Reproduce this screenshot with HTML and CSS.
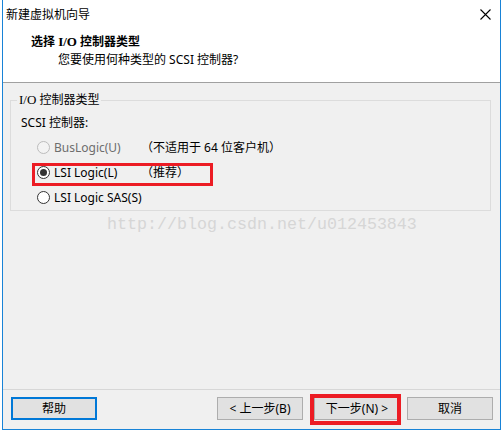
FILE: index.html
```html
<!DOCTYPE html>
<html lang="zh">
<head>
<meta charset="utf-8">
<title>新建虚拟机向导</title>
<link rel="stylesheet" href="styles.css">
</head>
<body>
<div class="window">
  <div class="titlebar">
    <span class="title">新建虚拟机向导</span>
    <svg class="close" width="11" height="11" viewBox="0 0 11 11"><path d="M0.5 0.5 L10.5 10.5 M10.5 0.5 L0.5 10.5" stroke="#000" stroke-width="1.1" fill="none"/></svg>
  </div>
  <div class="header">
    <div class="h-title">选择 <span class="serif">I/O</span> 控制器类型</div>
    <div class="h-sub">您要使用何种类型的 SCSI 控制器?</div>
  </div>
  <div class="content">
    <div class="main">
      <fieldset class="group">
        <legend><span class="serif-l">I/O</span> 控制器类型</legend>
        <div class="label">SCSI 控制器:</div>
        <div class="row disabled">
          <span class="radio"></span><span class="rlabel">BusLogic(U)</span><span class="note">（不适用于 64 位客户机）</span>
        </div>
        <div class="row">
          <span class="radio checked"></span><span class="rlabel">LSI Logic(L)</span><span class="note">（推荐）</span>
        </div>
        <div class="row">
          <span class="radio"></span><span class="rlabel">LSI Logic SAS(S)</span>
        </div>
      </fieldset>
    </div>
    <div class="footer">
      <button class="btn focus">帮助</button>
      <span class="spacer"></span>
      <button class="btn">&lt; 上一步(B)</button>
      <button class="btn next">下一步(N) &gt;</button>
      <button class="btn cancel">取消</button>
    </div>
  </div>
  <div class="watermark">http://blog.csdn.net/u012453843</div>
  <div class="mark mark-radio"></div>
  <div class="mark mark-next"></div>
</div>
</body>
</html>
```

FILE: styles.css
```css
* { box-sizing: border-box; }
html, body { margin: 0; padding: 0; background: #fff; }
body {
  font-family: "Noto Sans", "Noto Sans CJK SC", sans-serif;
  font-size: 12px;
  color: #000;
}
.window {
  position: relative;
  margin-left: 2px;
  width: 499px;
  height: 430px;
  border: 1px solid #1883d7;
  border-top: none;
  display: flex;
  flex-direction: column;
  background: #fff;
}
.titlebar {
  height: 29px;
  display: flex;
  align-items: center;
  justify-content: space-between;
  padding: 0 9px 0 3px;
  line-height: 16px;
}
.close { display: block; margin-top: -1px; }
.header {
  height: 54px;
  border-bottom: 1px solid #a0a0a0;
  padding: 5px 0 0 28px;
  line-height: 16px;
}
.h-title { font-weight: bold; }
.serif { font-family: "Liberation Serif", serif; font-weight: bold; font-size: 13px; }
.serif-l { font-family: "Liberation Serif", serif; font-size: 13px; }
.h-sub { margin-top: 2px; padding-left: 27px; }
.content {
  flex: 1;
  background: #f0f0f0;
  display: flex;
  flex-direction: column;
}
.main {
  flex: 1;
  padding: 9px 9px 0 7px;
}
.group {
  margin: 0;
  min-width: 0;
  border: 1px solid #dcdcdc;
  padding: 7px 0 1px 6px;
}
.group legend {
  padding: 0 2px;
  line-height: 16px;
}
.label { line-height: 16px; margin-left: 4px; }
.row {
  height: 24px;
  display: flex;
  align-items: center;
  margin-left: 20px;
}
.row + .row { margin-top: 1px; }
.label + .row { margin-top: 4px; }
.radio {
  width: 13px;
  height: 13px;
  border: 1px solid #333;
  border-radius: 50%;
  background: #fff;
  display: flex;
  align-items: center;
  justify-content: center;
  flex: none;
}
.radio.checked::after {
  content: "";
  width: 7px;
  height: 7px;
  border-radius: 50%;
  background: #333;
}
.rlabel { margin-left: 4px; width: 87px; white-space: nowrap; }
.note { white-space: nowrap; }
.disabled .radio { border-color: #bcbcbc; background: #f3f3f3; }
.disabled .rlabel { color: #6d6d6d; }
.footer {
  border-top: 1px solid #d7d7d7;
  padding: 7px 7px 9px 8px;
  display: flex;
}
.spacer { flex: 1; }
.btn {
  font: inherit;
  height: 23px;
  width: 86px;
  padding: 0;
  margin: 0;
  border: 1px solid #adadad;
  background: #e1e1e1;
  color: #000;
  line-height: 20px;
}
.btn.focus { border: 2px solid #0078d7; }
.btn.next { margin-left: 11px; }
.btn.cancel { margin-left: 7px; }
.watermark {
  position: absolute;
  left: 104px;
  top: 215px;
  font-family: "Liberation Mono", monospace;
  font-size: 16.67px;
  line-height: 20px;
  color: #d6d6d6;
  white-space: nowrap;
}
.mark {
  position: absolute;
  border: 3px solid #ec1c24;
}
.mark-radio { left: 29px; top: 163px; width: 181px; height: 23px; }
.mark-next { left: 307px; top: 394px; width: 91px; height: 31px; border-width: 4px; }
```
